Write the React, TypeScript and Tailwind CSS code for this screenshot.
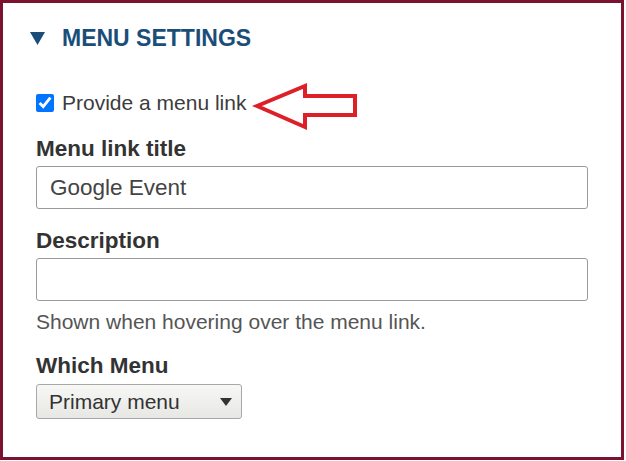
import { useState } from "react";

const font = { fontFamily: '"Liberation Sans", Arial, sans-serif' };

function TextField({ value }: { value?: string }) {
  return (
    <input
      type="text"
      defaultValue={value ?? ""}
      readOnly
      className="mt-[4px] box-border block h-[43px] w-[552px] rounded-[3px] border border-[#9a9a9a] bg-white px-[13px] text-[22.5px] text-[#444] outline-none"
      style={font}
    />
  );
}

export default function App() {
  const [checked, setChecked] = useState(true);

  return (
    <div className="h-[461px] w-[626px] bg-white" style={font}>
      <div className="relative box-border h-[460px] w-[624px] border-[3px] border-[#7b1230] bg-white">
        {/* Section heading */}
        <div className="flex items-center gap-[17px] pl-[27px] pt-[21px]">
          <svg width="15" height="14" viewBox="0 0 15 14" className="shrink-0">
            <path d="M0 1 L15 1 L7.5 14 Z" fill="#1a4e79" />
          </svg>
          <h2 className="text-[23px] font-bold leading-[28px] text-[#1a4e79]">
            MENU SETTINGS
          </h2>
        </div>

        <div className="pl-[33px]">
          {/* Checkbox */}
          <label className="mt-[39px] flex h-[24px] items-center gap-[8px]">
            <input
              type="checkbox"
              checked={checked}
              onChange={(e) => setChecked(e.target.checked)}
              className="m-0 h-[18px] w-[18px] accent-[#0075ff]"
            />
            <span className="text-[21px] leading-[24px] text-[#3c3c3c]">
              Provide a menu link
            </span>
          </label>

          {/* Menu link title */}
          <div className="mt-[21px] text-[22.5px] font-bold leading-[26px] text-[#333]">
            Menu link title
          </div>
          <TextField value="Google Event" />

          {/* Description */}
          <div className="mt-[19px] text-[22.5px] font-bold leading-[26px] text-[#333]">
            Description
          </div>
          <TextField />
          <p className="mt-[9px] text-[21px] leading-[24px] text-[#555]">
            Shown when hovering over the menu link.
          </p>

          {/* Which menu */}
          <div className="mt-[19px] text-[22.5px] font-bold leading-[26px] text-[#333]">
            Which Menu
          </div>
          <div className="mt-[5px] box-border flex h-[35px] w-[206px] items-center justify-between rounded-[3px] border border-[#a8a8a8] bg-gradient-to-b from-[#f7f7f5] to-[#e7e7e4] pl-[12px] pr-[9px]">
            <span className="text-[21px] leading-[24px] text-[#333]">Primary menu</span>
            <svg width="12" height="8" viewBox="0 0 12 8">
              <path d="M0 0 L12 0 L6 8 Z" fill="#333" />
            </svg>
          </div>
        </div>

        {/* Annotation arrow */}
        <svg
          width="110"
          height="50"
          viewBox="0 0 110 50"
          className="pointer-events-none absolute left-[249px] top-[78px]"
        >
          <path
            d="M5 25 L53 5 L53 15 L103 15 L103 34 L53 34 L53 46 Z"
            fill="none"
            stroke="#dd1f27"
            strokeWidth="4"
            strokeLinejoin="miter"
          />
        </svg>
      </div>
    </div>
  );
}
